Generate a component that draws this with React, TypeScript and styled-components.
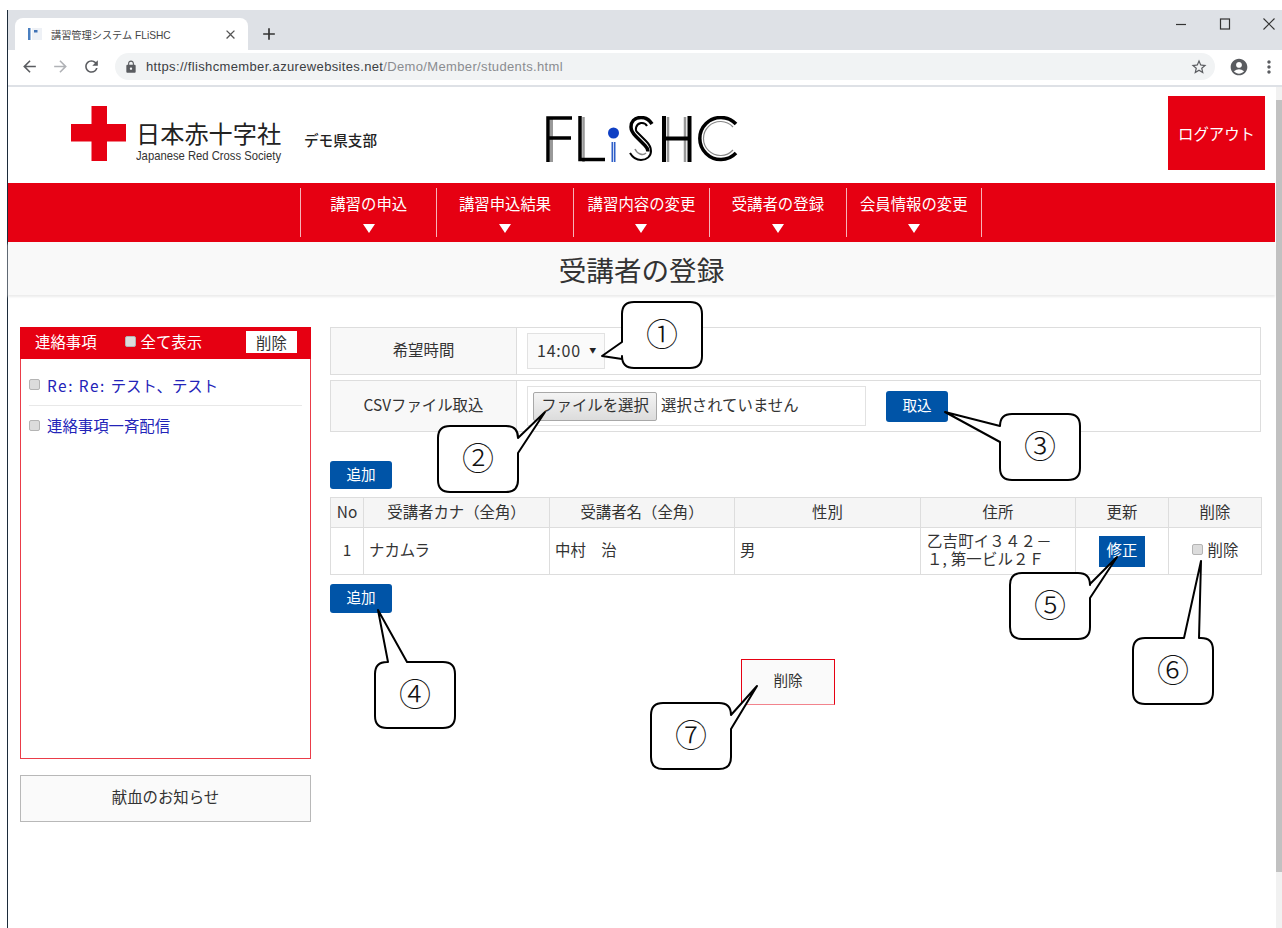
import React from "react";
import styled, { createGlobalStyle } from "styled-components";
import {
  MdAccountCircle,
  MdAdd,
  MdArrowBack,
  MdArrowForward,
  MdClose,
  MdLock,
  MdMoreVert,
  MdRefresh,
  MdStarBorder,
} from "react-icons/md";

const RED = "#e60012";
const BLUE = "#0054a7";
const LINE = "#dddddd";
const LATIN = `"Liberation Sans", "Noto Sans CJK JP", sans-serif`;

const GlobalStyle = createGlobalStyle`
  html, body {
    margin: 0;
    padding: 0;
    background: #fff;
    overflow: hidden;
  }
  body {
    font-family: "Noto Sans CJK JP", "Liberation Sans", sans-serif;
    color: #333;
  }
  * {
    box-sizing: border-box;
  }
`;

const Shell = styled.div`
  position: relative;
  width: 1282px;
  height: 928px;
  padding: 10px 0 0 7px;
  overflow: hidden;
`;

const Frame = styled.div`
  display: flex;
  flex-direction: column;
  height: 918px;
  border-left: 1px solid #1c2b3a;
`;

/* browser chrome */
const TabStrip = styled.div`
  display: flex;
  align-items: flex-end;
  flex: none;
  height: 40px;
  padding-left: 7px;
  background: #dee1e6;
`;

const Tab = styled.div`
  display: flex;
  align-items: center;
  width: 233px;
  height: 32px;
  padding: 0 10px 0 13px;
  background: #fff;
  border-radius: 8px 8px 0 0;
`;

const TabTitle = styled.span`
  flex: 1;
  margin-left: 9px;
  font-family: ${LATIN};
  font-size: 10.2px;
  color: #444;
  white-space: nowrap;
`;

const NewTab = styled.span`
  display: flex;
  align-items: center;
  height: 32px;
  margin-left: 11px;
  color: #333;
`;

const WindowButtons = styled.div`
  display: flex;
  align-self: flex-start;
  align-items: center;
  gap: 30px;
  height: 28px;
  margin-left: auto;
  padding-right: 6px;
  color: #333;
`;

const Toolbar = styled.div`
  display: flex;
  align-items: center;
  flex: none;
  height: 37px;
  padding: 0 3px 2px 12px;
  background: #fff;
  border-bottom: 2px solid #dee1e6;
`;

const NavIcons = styled.div`
  display: flex;
  align-items: center;
  gap: 12px;
  color: #5a5c60;
`;

const AddressBar = styled.div`
  display: flex;
  align-items: center;
  width: 1101px;
  height: 27px;
  margin-left: 14px;
  padding: 0 7px 0 9px;
  background: #f1f3f4;
  border-radius: 14px;
  color: #5a5c60;
`;

const Url = styled.span`
  margin-left: 8px;
  font-family: ${LATIN};
  font-size: 13px;
  letter-spacing: 0.35px;
  color: #8a8c90;
  white-space: nowrap;

  b {
    font-weight: 400;
    color: #3c4043;
  }
`;

const StarWrap = styled.span`
  display: flex;
  margin-left: auto;
`;

const ToolbarEnd = styled.div`
  display: flex;
  align-items: center;
  gap: 10px;
  margin-left: 14px;
  color: #5a5c60;
`;

/* page and scrollbar */
const Viewport = styled.div`
  display: flex;
  flex: 1;
  min-height: 0;
`;

const Page = styled.div`
  display: flex;
  flex-direction: column;
  width: 1268px;
`;

const Scrollbar = styled.div`
  flex: none;
  width: 6px;
  padding-top: 13px;
  padding-bottom: 56px;
  background: #f1f1f1;
`;

const ScrollThumb = styled.div`
  height: 100%;
  background: #c1c1c1;
`;

const Header = styled.header`
  display: flex;
  flex: none;
  height: 96px;
  padding: 9px 11px 0 63px;
`;

const BrandBlock = styled.div`
  display: flex;
  align-items: flex-start;
  padding-top: 10px;
`;

const BrandText = styled.div`
  display: flex;
  flex-direction: column;
  margin-left: 10px;
  padding-top: 14px;
  width: 146px;
`;

const BrandName = styled.span`
  font-size: 24.2px;
  line-height: 26px;
  color: #222;
  white-space: nowrap;
`;

const BrandEnglish = styled.span`
  margin-top: 3px;
  font-family: ${LATIN};
  font-size: 13.4px;
  line-height: 14px;
  color: #333;
  white-space: nowrap;
  transform: scaleX(0.84);
  transform-origin: left center;
`;

const Branch = styled.span`
  margin: 25px 0 0 22px;
  font-size: 14.6px;
  font-weight: 500;
  line-height: 18px;
  color: #222;
  white-space: nowrap;
`;

const ProductLogo = styled.svg`
  flex: none;
  margin: 20px 0 0 169px;
`;

const LogoutButton = styled.button`
  width: 97px;
  height: 74px;
  margin-left: auto;
  padding: 0;
  border: 0;
  background: ${RED};
  color: #fff;
  font: inherit;
  font-size: 15.4px;
`;

const NavBar = styled.nav`
  display: flex;
  flex: none;
  height: 59px;
  margin-right: 1px;
  padding: 5px 0 5px 292px;
  background: ${RED};
`;

const NavItem = styled.div<{ $last?: boolean }>`
  display: flex;
  flex-direction: column;
  align-items: center;
  width: 136.4px;
  border-left: 1px solid #f6b3b8;
  border-right: ${(p) => (p.$last ? "1px solid #f6b3b8" : "0")};
  padding-top: 4px;
  color: #fff;
  font-size: 15.4px;
  line-height: 22px;
  white-space: nowrap;
`;

const NavArrow = styled.span`
  width: 0;
  height: 0;
  margin-top: 10px;
  border-left: 6.5px solid transparent;
  border-right: 6.5px solid transparent;
  border-top: 9px solid #fff;
`;

const TitleBand = styled.div`
  display: flex;
  align-items: center;
  justify-content: center;
  flex: none;
  height: 53px;
  margin-right: 1px;
  background: #f9f9f9;
  box-shadow: 0 2px 2px #ececec;
  font-size: 27.6px;
  color: #333;
`;

const Content = styled.div`
  display: flex;
  gap: 19px;
  padding: 32px 0 0 12px;
`;

/* left column */
const Sidebar = styled.aside`
  display: flex;
  flex-direction: column;
  gap: 16px;
  width: 291px;
`;

const NoticePanel = styled.section`
  height: 432px;
  border: 1px solid #ea3c49;
  border-top: 0;
`;

const NoticeHead = styled.div`
  display: flex;
  align-items: center;
  height: 32px;
  margin: 0 -1px;
  padding: 0 14px 4px 15px;
  background: ${RED};
  color: #fff;
  font-size: 15.4px;
`;

const ShowAll = styled.label`
  display: flex;
  align-items: center;
  gap: 5px;
  margin-left: 28px;
`;

const NoticeDelete = styled.button`
  width: 51px;
  height: 22px;
  margin-top: 2px;
  margin-left: auto;
  padding: 0 0 2px;
  border: 0;
  background: #fff;
  color: #333;
  font: inherit;
`;

const NoticeList = styled.ul`
  margin: 0;
  padding: 11px 8px 0;
  list-style: none;
`;

const NoticeItem = styled.li<{ $divided?: boolean }>`
  display: flex;
  align-items: center;
  gap: 7px;
  height: ${(p) => (p.$divided ? "36px" : "38px")};
  padding-bottom: ${(p) => (p.$divided ? "6px" : "0")};
  border-bottom: ${(p) => (p.$divided ? "1px solid #e8e8e8" : "0")};
  font-size: 15.4px;
  color: #2323b8;
`;

const NoticeText = styled.span`
  white-space: pre;
`;

const ReplyPrefix = styled.span`
  letter-spacing: 1.5px;
`;

const CheckBox = styled.input`
  appearance: none;
  flex: none;
  width: 11px;
  height: 11px;
  margin: 0;
  background: #dcdcdc;
  border: 1px solid #b4b4b4;
  border-radius: 2px;
`;

const InfoBox = styled.div`
  display: flex;
  align-items: center;
  justify-content: center;
  height: 47px;
  padding-bottom: 5px;
  background: #fafafa;
  border: 1px solid #b8b8b8;
  font-size: 15.4px;
`;

/* right column */
const Main = styled.main`
  display: flex;
  flex-direction: column;
  width: 931px;
`;

const FormRow = styled.div<{ $height: number; $gap?: number }>`
  display: grid;
  grid-template-columns: 186px 1fr;
  height: ${(p) => p.$height}px;
  margin-top: ${(p) => p.$gap ?? 0}px;
  border: 1px solid ${LINE};
`;

const FormLabel = styled.div`
  display: flex;
  align-items: center;
  justify-content: center;
  padding-bottom: 5px;
  background: #f8f8f8;
  border-right: 1px solid ${LINE};
  font-size: 15.4px;
`;

const FormValue = styled.div`
  display: flex;
  align-items: center;
  padding-left: 10px;
`;

const TimeSelect = styled.div`
  display: flex;
  align-items: center;
  justify-content: space-between;
  width: 78px;
  height: 36px;
  padding: 0 7px 3px 9px;
  background: #fafafa;
  border: 1px solid #e2e2e2;
  font-size: 16px;
  letter-spacing: 0.8px;

  i {
    font-style: normal;
    font-size: 7px;
    color: #222;
  }
`;

const FilePicker = styled.div`
  display: flex;
  align-items: center;
  gap: 4px;
  width: 339px;
  height: 40px;
  padding-left: 5px;
  border: 1px solid #e2e2e2;
  font-size: 15.4px;
  white-space: nowrap;
`;

const PickerNote = styled.span`
  position: relative;
  top: -2px;
`;

const FileButton = styled.button`
  width: 124px;
  height: 29px;
  padding: 0 0 4px;
  background: linear-gradient(#f4f4f4, #dcdcdc);
  border: 1px solid #a8a8a8;
  border-radius: 2px;
  color: #333;
  font: inherit;
`;

const BlueButton = styled.button<{ $height: number; $top?: number; $left?: number }>`
  flex: none;
  align-self: flex-start;
  width: 62px;
  height: ${(p) => p.$height}px;
  margin-top: ${(p) => p.$top ?? 0}px;
  margin-left: ${(p) => p.$left ?? 0}px;
  padding: 0 0 4px;
  background: ${BLUE};
  border: 0;
  border-radius: 3px;
  color: #fff;
  font: inherit;
  font-size: 14.6px;
`;

const ImportButton = styled(BlueButton)`
  align-self: center;
`;

const StudentTable = styled.table`
  width: 931px;
  margin-top: 8px;
  border-collapse: collapse;
  table-layout: fixed;
  font-size: 15.4px;

  th,
  td {
    border: 1px solid ${LINE};
  }

  th {
    height: 30px;
    padding: 0 0 4px;
    background: #f5f5f5;
    font-weight: 400;
  }

  td {
    height: 47px;
    padding: 0 5px 5px;
    white-space: pre-wrap;
  }
`;

const CenterCell = styled.td`
  text-align: center;
`;

const AddressCell = styled.td`
  && {
    padding: 0 6px 5px;
  }
  line-height: 18px;
  letter-spacing: 0.2px;
`;

const ButtonCell = styled.td`
  && {
    padding: 0;
  }
  text-align: center;
`;

const EditButton = styled.button`
  width: 46px;
  height: 31px;
  padding: 0 0 4px;
  vertical-align: middle;
  background: ${BLUE};
  border: 0;
  color: #fff;
  font: inherit;
`;

const RowDelete = styled.label`
  display: inline-flex;
  align-items: center;
  gap: 5px;
`;

const DeleteBox = styled.button`
  width: 94px;
  height: 46px;
  margin: 46px 0 0 411px;
  padding: 0 0 5px;
  background: #fafafa;
  border: 1px solid ${RED};
  border-bottom-color: #f2838c;
  color: #333;
  font: inherit;
  font-size: 14.6px;
`;

/* numbered speech bubbles lying over the page */
const Callout = styled.div<{ $x: number; $y: number }>`
  position: absolute;
  left: ${(p) => p.$x}px;
  top: ${(p) => p.$y}px;
  display: flex;
  align-items: center;
  justify-content: center;
  width: 80px;
  height: 66px;
  font-size: 32px;
  font-weight: 300;
  color: #111;

  svg {
    position: absolute;
    inset: 0;
    overflow: visible;
  }

  span {
    position: relative;
    top: -3px;
  }
`;

type Tail = {
  side: "left" | "right" | "top";
  a: number;
  b: number;
  x: number;
  y: number;
};

// rounded box outline, walked clockwise, with the pointer spliced into one side
function bubblePath(w: number, h: number, t: Tail) {
  const r = 12;
  let d = `M${r} 0`;
  if (t.side === "top") d += `H${t.a}L${t.x} ${t.y}L${t.b} 0`;
  d += `H${w - r}Q${w} 0 ${w} ${r}`;
  if (t.side === "right") d += `V${t.a}L${t.x} ${t.y}L${w} ${t.b}`;
  d += `V${h - r}Q${w} ${h} ${w - r} ${h}H${r}Q0 ${h} 0 ${h - r}`;
  if (t.side === "left") d += `V${t.b}L${t.x} ${t.y}L0 ${t.a}`;
  d += `V${r}Q0 0 ${r} 0Z`;
  return d;
}

const callouts: { n: string; x: number; y: number; tail: Tail }[] = [
  { n: "①", x: 622, y: 302, tail: { side: "left", a: 40, b: 57, x: -20, y: 54 } },
  { n: "②", x: 438, y: 426, tail: { side: "right", a: 12, b: 27, x: 107, y: -14 } },
  { n: "③", x: 1000, y: 414, tail: { side: "left", a: 12, b: 28, x: -55, y: -2 } },
  { n: "④", x: 375, y: 662, tail: { side: "top", a: 13, b: 32, x: 3, y: -52 } },
  { n: "⑤", x: 1010, y: 573, tail: { side: "right", a: 11, b: 25, x: 107, y: -16 } },
  { n: "⑥", x: 1133, y: 638, tail: { side: "top", a: 51, b: 66, x: 68, y: -77 } },
  { n: "⑦", x: 651, y: 703, tail: { side: "right", a: 12, b: 26, x: 106, y: -17 } },
];

const navItems = ["講習の申込", "講習申込結果", "講習内容の変更", "受講者の登録", "会員情報の変更"];
const columns = [
  { label: "No", width: 33 },
  { label: "受講者カナ（全角）", width: 186 },
  { label: "受講者名（全角）", width: 185 },
  { label: "性別", width: 186 },
  { label: "住所", width: 155 },
  { label: "更新", width: 93 },
  { label: "削除", width: 93 },
];

const Favicon = () => (
  <svg width="14" height="14" viewBox="0 0 14 14">
    <rect x="0" y="1" width="2.5" height="12" fill="#4a7fc0" />
    <rect x="4" y="1" width="10" height="12" fill="#eef1f6" />
    <rect x="6" y="3" width="3.5" height="2.5" fill="#3f72b5" />
  </svg>
);

const RedCross = () => (
  <svg width="55" height="55" viewBox="0 0 55 55">
    <path d="M20.5 0H36V18H55V35.500H36V55H20.500V35.500H0V18H20.500Z" fill={RED} />
  </svg>
);

// FLiSHC wordmark: black strokes with a grey line running alongside
const FlishcLogo = () => (
  <ProductLogo width="192" height="46" viewBox="0 0 192 46" role="img" aria-label="FLiSHC">
    <g fill="none" strokeLinecap="butt">
      <path d="M5.500 46V2" stroke="#999" strokeWidth="3" />
      <path d="M2 46V2H26M3 22H25" stroke="#000" strokeWidth="3.500" />
      <path d="M37.500 46V1" stroke="#999" strokeWidth="2.500" />
      <path d="M34 0V43.500H59" stroke="#000" strokeWidth="3.500" />
      <path d="M67.500 26V46" stroke="#2f5fc8" strokeWidth="4" />
      <path d="M67.500 26V46" stroke="#cfdaf2" strokeWidth="1" />
      <path d="M106 8C103 3 99 1.500 95 1.500C88 1.500 85 6 85 11C85 15 87 17.500 90 20.500L99 29.500C101 31.500 102 33.500 102 35.500"
        stroke="#000" strokeWidth="3.500" />
      <path d="M84 37C87 42 90 44 95 44C101 44 105 40 105 35C105 31 103 28 100 25L91 16C89 14 89.500 8 95 7C98 6.700 100 8 101 10"
        stroke="#000" strokeWidth="2" />
      <path d="M89 33C91 38 97 40 100 37" stroke="#888" strokeWidth="1.500" />
      <path d="M122 1V46M139 1V46" stroke="#999" strokeWidth="2.500" />
      <path d="M118 0V46M143.500 0V46M118 22.500H143" stroke="#000" strokeWidth="4" />
      <path d="M190 8A21 21 0 1 0 190 37" stroke="#000" strokeWidth="3.500" />
      <path d="M187 11A17 17 0 1 0 187 34" stroke="#888" strokeWidth="1.200" />
    </g>
    <circle cx="67.500" cy="17" r="5.500" fill="#0f3fc4" />
  </ProductLogo>
);

export default function App(): JSX.Element {
  return (
    <Shell>
      <GlobalStyle />
      <Frame>
        <TabStrip>
          <Tab>
            <Favicon />
            <TabTitle>講習管理システム FLiSHC</TabTitle>
            <MdClose size={15} color="#555" />
          </Tab>
          <NewTab>
            <MdAdd size={20} />
          </NewTab>
          <WindowButtons>
            <svg width="14" height="28" viewBox="0 0 14 28">
              <path d="M2 14.500H12" stroke="#333" strokeWidth="1.200" />
            </svg>
            <svg width="14" height="28" viewBox="0 0 14 28">
              <rect x="2.500" y="9" width="9" height="10" fill="none" stroke="#333" strokeWidth="1.200" />
            </svg>
            <svg width="14" height="28" viewBox="0 0 14 28">
              <path d="M1.500 8.500L12.500 19.500M12.500 8.500L1.500 19.500" stroke="#333" strokeWidth="1.100" />
            </svg>
          </WindowButtons>
        </TabStrip>
        <Toolbar>
          <NavIcons>
            <MdArrowBack size={19} />
            <MdArrowForward size={19} color="#b0b2b6" />
            <MdRefresh size={19} />
          </NavIcons>
          <AddressBar>
            <MdLock size={14} />
            <Url>
              <b>https://flishcmember.azurewebsites.net</b>/Demo/Member/students.html
            </Url>
            <StarWrap>
              <MdStarBorder size={18} />
            </StarWrap>
          </AddressBar>
          <ToolbarEnd>
            <MdAccountCircle size={20} />
            <MdMoreVert size={20} />
          </ToolbarEnd>
        </Toolbar>
        <Viewport>
          <Page>
            <Header>
              <BrandBlock>
                <RedCross />
                <BrandText>
                  <BrandName>日本赤十字社</BrandName>
                  <BrandEnglish>Japanese Red Cross Society</BrandEnglish>
                </BrandText>
                <Branch>デモ県支部</Branch>
              </BrandBlock>
              <FlishcLogo />
              <LogoutButton>ログアウト</LogoutButton>
            </Header>
            <NavBar>
              {navItems.map((label, i) => (
                <NavItem key={label} $last={i === navItems.length - 1}>
                  {label}
                  <NavArrow />
                </NavItem>
              ))}
            </NavBar>
            <TitleBand>受講者の登録</TitleBand>
            <Content>
              <Sidebar>
                <NoticePanel>
                  <NoticeHead>
                    連絡事項
                    <ShowAll>
                      <CheckBox type="checkbox" />
                      全て表示
                    </ShowAll>
                    <NoticeDelete>削除</NoticeDelete>
                  </NoticeHead>
                  <NoticeList>
                    <NoticeItem $divided>
                      <CheckBox type="checkbox" />
                      <NoticeText>
                        <ReplyPrefix>Re: Re: </ReplyPrefix>テスト、テスト
                      </NoticeText>
                    </NoticeItem>
                    <NoticeItem>
                      <CheckBox type="checkbox" />
                      <NoticeText>連絡事項一斉配信</NoticeText>
                    </NoticeItem>
                  </NoticeList>
                </NoticePanel>
                <InfoBox>献血のお知らせ</InfoBox>
              </Sidebar>
              <Main>
                <FormRow $height={48}>
                  <FormLabel>希望時間</FormLabel>
                  <FormValue>
                    <TimeSelect>
                      14:00
                      <i>▼</i>
                    </TimeSelect>
                  </FormValue>
                </FormRow>
                <FormRow $height={52} $gap={5}>
                  <FormLabel>CSVファイル取込</FormLabel>
                  <FormValue>
                    <FilePicker>
                      <FileButton>ファイルを選択</FileButton>
                      <PickerNote>選択されていません</PickerNote>
                    </FilePicker>
                    <ImportButton $height={31} $left={20}>
                      取込
                    </ImportButton>
                  </FormValue>
                </FormRow>
                <BlueButton $height={28} $top={29}>
                  追加
                </BlueButton>
                <StudentTable>
                  <colgroup>
                    {columns.map((c) => (
                      <col key={c.label} width={c.width} />
                    ))}
                  </colgroup>
                  <thead>
                    <tr>
                      {columns.map((c) => (
                        <th key={c.label}>{c.label}</th>
                      ))}
                    </tr>
                  </thead>
                  <tbody>
                    <tr>
                      <CenterCell>1</CenterCell>
                      <td>ナカムラ</td>
                      <td>中村　治</td>
                      <td>男</td>
                      <AddressCell>乙吉町イ３４２－１, 第一ビル２Ｆ</AddressCell>
                      <ButtonCell>
                        <EditButton>修正</EditButton>
                      </ButtonCell>
                      <CenterCell>
                        <RowDelete>
                          <CheckBox type="checkbox" />
                          削除
                        </RowDelete>
                      </CenterCell>
                    </tr>
                  </tbody>
                </StudentTable>
                <BlueButton $height={29} $top={9}>
                  追加
                </BlueButton>
                <DeleteBox>削除</DeleteBox>
              </Main>
            </Content>
          </Page>
          <Scrollbar>
            <ScrollThumb />
          </Scrollbar>
        </Viewport>
      </Frame>
      {callouts.map((c) => (
        <Callout key={c.n} $x={c.x} $y={c.y}>
          <svg width="80" height="66" viewBox="0 0 80 66">
            <path d={bubblePath(80, 66, c.tail)} fill="#fff" stroke="#000" strokeWidth="2" strokeLinejoin="round" />
          </svg>
          <span>{c.n}</span>
        </Callout>
      ))}
    </Shell>
  );
}
